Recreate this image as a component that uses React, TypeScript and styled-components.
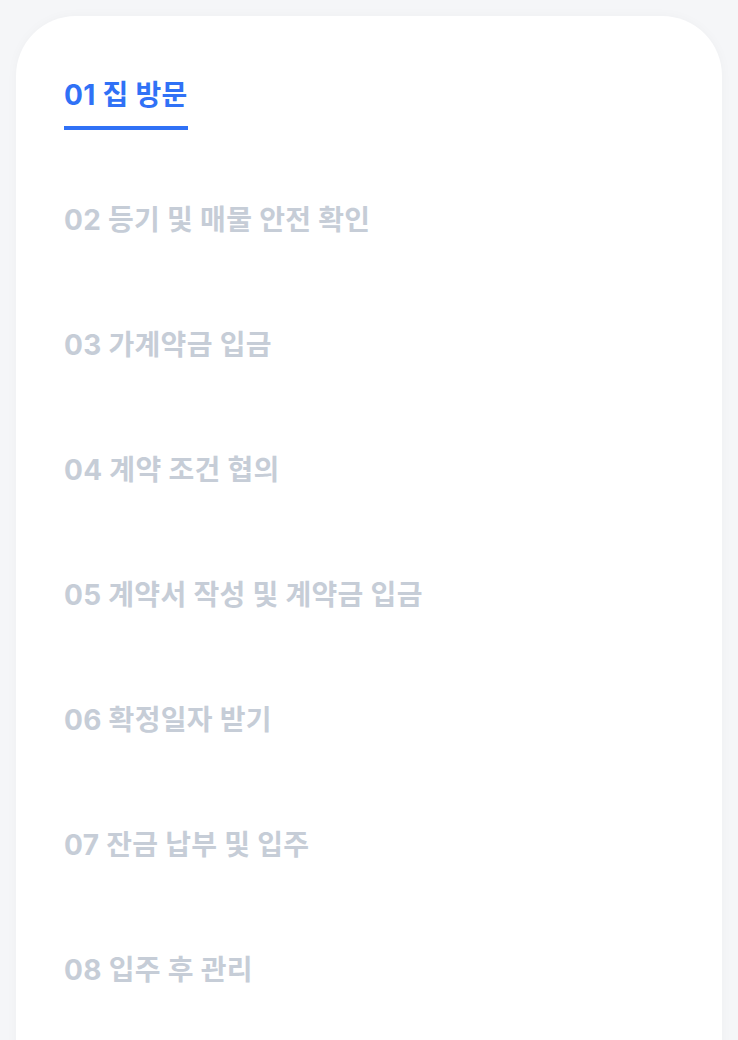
import React from "react";
import styled, { createGlobalStyle } from "styled-components";

const steps = [
  "01 집 방문",
  "02 등기 및 매물 안전 확인",
  "03 가계약금 입금",
  "04 계약 조건 협의",
  "05 계약서 작성 및 계약금 입금",
  "06 확정일자 받기",
  "07 잔금 납부 및 입주",
  "08 입주 후 관리",
];

const GlobalStyle = createGlobalStyle`
  html, body {
    margin: 0;
    padding: 0;
    background: #f5f6f8;
  }
  body {
    font-family: Inter, "Noto Sans CJK KR", sans-serif;
  }
`;

const App: React.FC = () => {
  const active = 0;
  return (
    <>
      <GlobalStyle />
      <Page>
        <Card>
          <StepList>
            {steps.map((label, i) => (
              <StepItem key={label} $active={i === active}>
                {label}
              </StepItem>
            ))}
          </StepList>
        </Card>
      </Page>
    </>
  );
};

const Page = styled.div`
  width: 738px;
  height: 1040px;
  padding: 16px 16px 0 16px;
  box-sizing: border-box;
  overflow: hidden;
`;

const Card = styled.div`
  background: #ffffff;
  border-radius: 60px 60px 0 0;
  min-height: 1100px;
  padding: 61px 48px 0 48px;
  box-sizing: border-box;
  box-shadow: 0 0 12px rgba(30, 40, 60, 0.03);
`;

const StepList = styled.div`
  display: flex;
  flex-direction: column;
  align-items: flex-start;
  gap: 72px;
`;

const StepItem = styled.div<{ $active: boolean }>`
  font-family: Inter, "Noto Sans CJK KR", sans-serif;
  font-size: 28px;
  font-weight: 700;
  line-height: 36px;
  letter-spacing: 0.3px;
  color: ${(p) => (p.$active ? "#3071f6" : "#c6cdd7")};
  padding-bottom: 13px;
  border-bottom: 4px solid ${(p) => (p.$active ? "#3071f6" : "transparent")};
  cursor: pointer;
`;

export default App;
